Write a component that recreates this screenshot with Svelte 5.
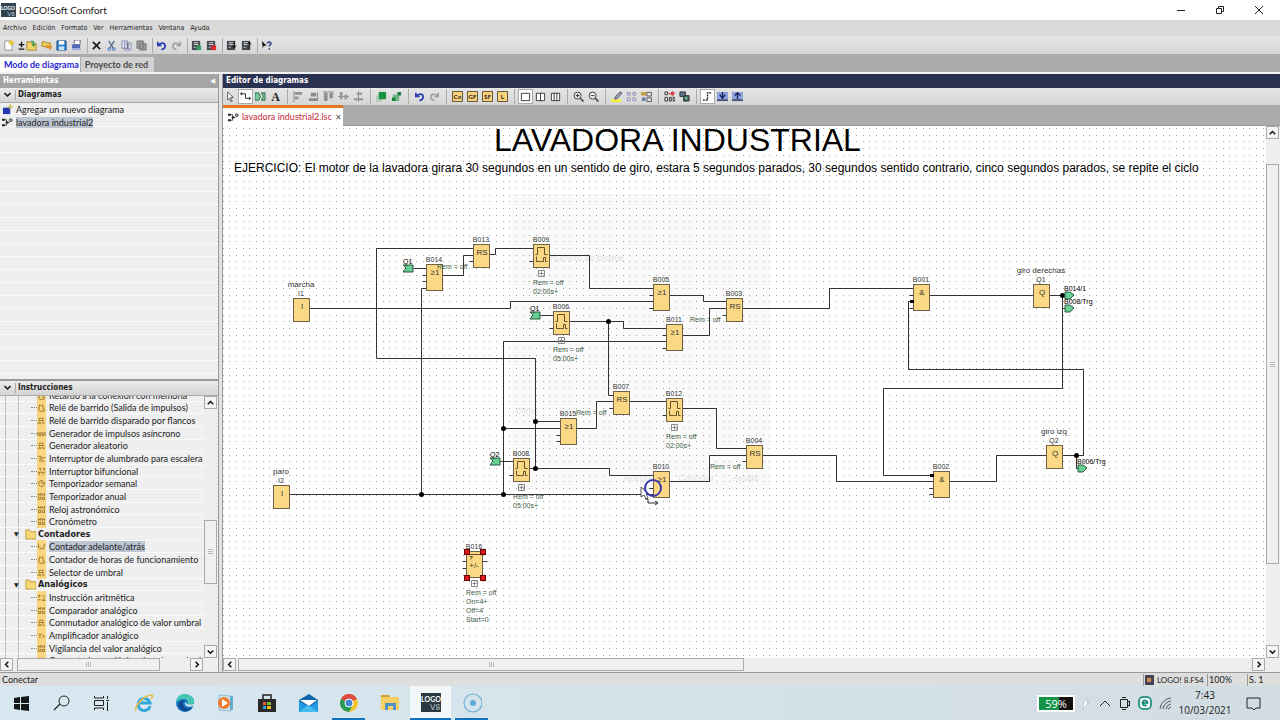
<script>
	const menus = ['Archivo', 'Edición', 'Formato', 'Ver', 'Herramientas', 'Ventana', 'Ayuda'];

	const undo = '<path d="M2 2v4h4M2.5 6C5 2 10 3 10 6.500 10 9 8 10 6 10.500" fill="none" stroke="#2938b5" stroke-width="1.8"/>';
	const redo = '<path d="M10 2v4H6M9.500 6C7 2 2 3 2 6.500 2 9 4 10 6 10.500" fill="none" stroke="#9b9b9b" stroke-width="1.6"/>';
	const page = '<path d="M2 1h6l2 2v8H2z" fill="#fff" stroke="#8a9099"/>';
	const chip = '<path d="M1 1h9v10H1z" fill="#45494e"/><path d="M3 3h5M3 5h5M3 8h2" stroke="#dfe3e6"/>';
	const diagram = '<path d="M2 3h3v6H2M5 6h3" fill="none" stroke="#444"/><path d="M0 2h3v2H0zM0 8h3v2H0zM4 5h3v2H4z" fill="#222"/><circle cx="9.500" cy="3.500" r="1.500" fill="#9c9" stroke="#333"/>';
	const letterBox = (t) =>
		`<path d="M.5.5h11v11H.5z" fill="#fbd27a" stroke="#574a2c"/><text x="6" y="8.500" font-size="7" font-weight="bold" text-anchor="middle" fill="#222">${t}</text>`;

	const icons = {
		newFile: page + '<path d="M9 0v6M6 3h6" stroke="#e5c72b" stroke-width="2"/>',
		plusMinus: '<path d="M6 2v6M3 5h6M3 10h6" stroke="#111" stroke-width="1.500"/>',
		open: '<path d="M1 2h4l1 2h5v7H1z" fill="#f4d56a" stroke="#a98523"/><path d="M5 1c3-1 5 1 4 4l2-1-3 4-2-4 2 1c0-2-1-3-3-3z" fill="#2d9c49"/>',
		load: '<path d="M1 2h4l1 1h4v4H1z" fill="#f0cd63" stroke="#a98523"/><path d="M5 6h5V3l2 5-3 4V9H5z" fill="#d99325"/>',
		save: '<path d="M1 1h10v10H1z" fill="#2a7fc9" stroke="#1b4f86"/><path d="M3 1h6v4H3z" fill="#fff"/><path d="M3 7h6v4H3z" fill="#c9e4f7"/>',
		print: '<path d="M4 0h6v5H3z" fill="#fff" stroke="#667"/><path d="M1 5h9v4H1z" fill="#5368bb"/><path d="M1 9h10v2H1z" fill="#9eabe0"/>',
		remove: '<path d="M2 2l8 8M10 2l-8 8" stroke="#15171c" stroke-width="1.700"/>',
		cut: '<path d="M3 1l5 8M9 1L4 9" stroke="#4c6484" stroke-width="1.300"/><circle cx="3.500" cy="10" r="1.500" fill="none" stroke="#2f76bd"/><circle cx="8.500" cy="10" r="1.500" fill="none" stroke="#2f76bd"/>',
		copy: '<path d="M1 1h6v8H1zM4 3h7v8H4z" fill="#dfe3f2" stroke="#848cac"/><path d="M6 5h3M7.500 5v4M6 9h3" stroke="#556"/>',
		paste: '<path d="M1 1h7v8H1zM4 4h7v7H4z" fill="#9b9b9b" stroke="#777"/>',
		undo,
		redo,
		run: chip + '<path d="M6 6h5v5H6z" fill="#31a265"/>',
		stop: chip + '<path d="M6 6h5v5H6z" fill="#e12a2d"/>',
		toPlc: chip + '<path d="M9 1v7M7 6l2 3 2-3" fill="none" stroke="#111"/>',
		fromPlc: chip + '<path d="M9 10V3M7 5l2-3 2 3" fill="none" stroke="#111"/>',
		help: '<path d="M1 1l5 5-3 .5L2 9z" fill="#111"/><path d="M7 4c0-3 4-2 4 0 0 1-2 1-2 3M9 9v1.500" fill="none" stroke="#26357d" stroke-width="1.500"/>',
		pointer: '<path d="M3 1l6 6H6l2 4-1.500.5L5 8 3 10z" fill="#fff" stroke="#333" stroke-width=".8"/>',
		wire: '<path d="M1 3h5v5h5" fill="none" stroke="#222"/><path d="M0 3l2-2v4zM12 8l-2-2v4z" fill="#222"/>',
		connector: '<path d="M0 2h4l2 4-2 4H0zM11 2H7l2 4-2 4h4z" fill="#7ac795" stroke="#276b44"/>',
		text: '<text x="6" y="11" font-size="13" font-family="Liberation Serif, serif" font-weight="bold" text-anchor="middle" fill="#222">A</text>',
		alignLeft: '<path d="M1 0v12" stroke="#888"/><path d="M2 1h8v3H2zM2 6h4v3H2z" fill="#929292"/>',
		alignRight: '<path d="M10 1h1v10H1V8h9zM3 2h6v4H3z" fill="#8b8b8b"/>',
		alignTop: '<path d="M0 1h12" stroke="#888"/><path d="M1 2h4v9H1zM7 2h4v6H7z" fill="#8f8f8f"/>',
		centerV: '<path d="M0 6h12" stroke="#888"/><path d="M2 1h3v8H2zM7 4h3v5H7z" fill="#979797"/>',
		centerH: '<path d="M6 0v12" stroke="#888"/><path d="M4 2h6v2H4zM1 8h10v2H1z" fill="#929292"/>',
		front: '<path d="M0 5h7v7H0z" fill="#b5cbbb"/><path d="M3 1h8v8H3z" fill="#189443"/>',
		back: '<path d="M2 4h7v7H2z" fill="#6fb585"/><path d="M1 7h4v4H1zM7 1h4v4H7z" fill="#187f3b"/>',
		co: letterBox('Co'),
		gf: letterBox('GF'),
		sf: letterBox('SF'),
		l: letterBox('L'),
		one: '<path d="M1.500 2.500h9v8h-9z" fill="#fff" stroke="#333"/>',
		two: '<path d="M1.500 2.500h9v8h-9zM6 2v9" fill="#fff" stroke="#333"/>',
		three: '<path d="M1.500 2.500h9v8h-9zM4.500 2v9M7.500 2v9" fill="#fff" stroke="#333"/>',
		zoomIn: '<circle cx="5" cy="5" r="3.800" fill="#eef4f7" stroke="#333"/><path d="M3 5h4M5 3v4" stroke="#222"/><path d="M8 8l3.500 3.500" stroke="#555" stroke-width="2"/>',
		zoomOut: '<circle cx="5" cy="5" r="3.800" fill="#eef4f7" stroke="#333"/><path d="M3 5h4" stroke="#222"/><path d="M8 8l3.500 3.500" stroke="#555" stroke-width="2"/>',
		marker: '<path d="M0 9h11v3H0z" fill="#f5ed35"/><path d="M4 9l1-3 5-5 2 1-5 6z" fill="#98a1aa" stroke="#556"/>',
		grid: '<path d="M1.500 1.500h3v3h-3zM7.500 1.500h3v3h-3zM1.500 7.500h3v3h-3zM7.500 7.500h3v3h-3z" fill="#edf0ff" stroke="#5b6795" stroke-dasharray="2 1"/>',
		params: '<path d="M0 1h6v4H0z" fill="#c0a347"/><path d="M6.500 1.500h5v4h-5zM6.500 7.500h5v4h-5z" fill="#e4e4e4" stroke="#555"/><path d="M1 7h4v4H1z" fill="#6780a8"/>',
		simulate: '<path d="M1 1h3v3H1zM1 7h3v4H1zM6 7h2v4H6zM10 7h2v4h-2z" fill="none" stroke="#333"/><path d="M5 3h4v3" fill="none" stroke="#d22"/><circle cx="9.500" cy="2.500" r="1.500" fill="#e66" stroke="#b11"/>',
		online: '<path d="M1 1h6v5H1z" fill="#5c708b" stroke="#333"/><path d="M5 5h6v6H5z" fill="#3f6b5c" stroke="#333"/><path d="M7 7h2v2H7z" fill="#8fe0a8"/>',
		lines: '<path d="M1 10h5V2h5" fill="none" stroke="#111" stroke-width="1.500" stroke-dasharray="2 1"/>',
		expand: '<path d="M0 1h12v10H0z" fill="#8ea3dd"/><path d="M0 9h12v2H0z" fill="#4d5677"/><path d="M6 1v6M3 4l3 4 3-4" fill="none" stroke="#17245e" stroke-width="1.500"/>',
		collapse: '<path d="M0 1h12v10H0z" fill="#8ea3dd"/><path d="M0 9h12v2H0z" fill="#4d5677"/><path d="M6 9V3M3 5l3-3 3 3" fill="none" stroke="#17245e" stroke-width="1.500"/>',
		addDiagram: '<path d="M1 4h8v7H1z" fill="#2539b4"/><path d="M9 0v6M6 3h6" stroke="#cbbd62" stroke-width="1.500"/>',
		diagram,
		folder: '<path d="M1 3V1h4l1 2h6v8H1z" fill="#f7d978" stroke="#bf9a3f"/>'
	};

	const mainTools = [
		['newFile', 'plusMinus', 'open', 'load', 'save', 'print'],
		['remove', 'cut', 'copy', 'paste'],
		['undo', 'redo'],
		['run', 'stop'],
		['toPlc', 'fromPlc'],
		['help']
	];
	const editorTools = [
		['pointer', 'wire', 'connector', 'text'],
		['alignLeft', 'alignRight', 'alignTop', 'centerV', 'centerH'],
		['front', 'back'],
		['undo', 'redo'],
		['co', 'gf', 'sf', 'l'],
		['one', 'two', 'three'],
		['zoomIn', 'zoomOut'],
		['marker', 'grid', 'params'],
		['simulate', 'online'],
		['lines', 'expand', 'collapse']
	];
	const pressed = ['wire', 'one', 'lines'];

	// small glyphs on the yellow strip of the instruction tree
	const glyphs = {
		relay: 'M1 9h2V3h5v6h3M3 11h7',
		edge: 'M1 10h2V3h5v7h2M4 6h4M5 8v3',
		comb: 'M1 9V5h2v4h2V5h2v4h2V5h2v4',
		stair: 'M1 3h4l2 7h3M4 5v6M6 5h5',
		dual: 'M2 2h3v3M7 2h3v3M1 7h10M3 7v4M8 7v4',
		clock: 'M6 2a4 4 0 1 0 .1 0M6 3v3h3',
		date: 'M2 5V2l2 2 1-2v3M7 5V2l2 2 1-2v3M2 7h3v3H2zM7 7h3v3H7z',
		math: 'M1 4h4M3 2v4M7 4h4M1 9h4M7 8h4M7 10h4',
		count: 'M2 2v5h3M4 9h5V4h2M2 10h1',
		amp: 'M2 3l2 3 2-3M4 6v4M7 5l3 2-3 2'
	};
	const tree = [
		{ t: 'Retardo a la conexión con memoria', g: 'relay' },
		{ t: 'Relé de barrido (Salida de impulsos)', g: 'relay' },
		{ t: 'Relé de barrido disparado por flancos', g: 'edge' },
		{ t: 'Generador de impulsos asíncrono', g: 'comb' },
		{ t: 'Generador aleatorio', g: 'edge' },
		{ t: 'Interruptor de alumbrado para escalera', g: 'stair' },
		{ t: 'Interruptor bifuncional', g: 'dual' },
		{ t: 'Temporizador semanal', g: 'clock' },
		{ t: 'Temporizador anual', g: 'date' },
		{ t: 'Reloj astronómico', g: 'date' },
		{ t: 'Cronómetro', g: 'date' },
		{ t: 'Contadores', folder: true },
		{ t: 'Contador adelante/atrás', g: 'count', sel: true },
		{ t: 'Contador de horas de funcionamiento', g: 'relay' },
		{ t: 'Selector de umbral', g: 'edge' },
		{ t: 'Analógicos', folder: true },
		{ t: 'Instrucción aritmética', g: 'math' },
		{ t: 'Comparador analógico', g: 'date' },
		{ t: 'Conmutador analógico de valor umbral', g: 'edge' },
		{ t: 'Amplificador analógico', g: 'amp' },
		{ t: 'Vigilancia del valor analógico', g: 'date' },
		{ t: 'Conmutador analógico de valor umbral dif', g: 'relay' }
	];

	// scroll position of the sheet inside the canvas
	const scroll = { x: 223, y: 126 };

	const blocks = [
		{ id: 'I1', x: 293, y: 298, k: 'I', title: 'marcha' },
		{ id: 'I2', x: 273, y: 485, k: 'I', title: 'paro' },
		{ id: 'B013', x: 473, y: 244, k: 'RS' },
		{ id: 'B009', x: 533, y: 244, k: 'pulse', par: ['Rem = off', '02:00s+'] },
		{ id: 'B014', x: 426, y: 264, k: '≥1' },
		{ id: 'B006', x: 553, y: 311, k: 'pulse', par: ['Rem = off', '05:00s+'] },
		{ id: 'B005', x: 653, y: 284, k: '≥1' },
		{ id: 'B003', x: 726, y: 298, k: 'RS' },
		{ id: 'B011', x: 666, y: 324, k: '≥1' },
		{ id: 'B007', x: 613, y: 391, k: 'RS' },
		{ id: 'B012', x: 666, y: 398, k: 'pulse', par: ['Rem = off', '02:00s+'] },
		{ id: 'B015', x: 560, y: 418, k: '≥1' },
		{ id: 'B008', x: 513, y: 458, k: 'pulse', par: ['Rem = off', '05:00s+'] },
		{ id: 'B010', x: 653, y: 471, k: '≥1' },
		{ id: 'B004', x: 746, y: 445, k: 'RS' },
		{ id: 'B001', x: 913, y: 284, k: '&' },
		{ id: 'B002', x: 933, y: 471, k: '&' },
		{ id: 'Q1', x: 1033, y: 284, k: 'Q', title: 'giro derechas' },
		{ id: 'Q2', x: 1046, y: 445, k: 'Q', title: 'giro izq' },
		{ id: 'B016', x: 466, y: 551, k: '+/-', sel: true, par: ['Rem = off', 'On=4+', 'Off=4', 'Start=0'] }
	];
	const isTall = (b) => ['≥1', '&', '+/-'].includes(b.k);
	const heightOf = (b) => (isTall(b) ? 26 : 23);

	const wires = [
		'M309 308H510V301H653',
		'M473 248H376V358H535V468',
		'M413 268H426',
		'M442 275H463V255H473',
		'M426 288H421V494',
		'M489 254H495V248H533',
		'M549 255H589V288H653',
		'M540 315H553',
		'M569 321H623V328H666',
		'M608 321V395H613',
		'M669 295H703V301H726',
		'M682 335H709V308H726',
		'M666 341H503V494',
		'M742 308H829V288H913',
		'M929 295H1033',
		'M1049 295H1062V388H883V475H933',
		'M1062 295V308H1066',
		'M913 301H908V369H1083V455H1062',
		'M1076 455V468H1080',
		'M762 455H836V481H933',
		'M949 481H996V455H1046',
		'M503 428H560',
		'M535 421H560',
		'M576 428H596V401H613',
		'M629 401H666',
		'M682 408H716V448H746',
		'M669 481H709V455H746',
		'M500 461H513',
		'M529 468H609V475H653',
		'M289 494H653',
		// open pins
		'M469 261H473M529 261H533M422 275H426M422 281H426M549 328H553M649 295H653M649 308H653',
		'M722 315H726M662 335H666M662 348H666M609 408H613M662 415H666M556 435H560M556 441H560',
		'M509 475H513M649 488H653M742 461H746M909 295H913M909 308H913M929 488H933M929 494H933',
		'M462 561H466M462 568H466M482 561H487'
	];
	const nodes = [[608, 321], [503, 428], [535, 421], [535, 468], [421, 494], [503, 494], [1062, 295], [1076, 455]];
	const remNotes = [[437, 269], [690, 322], [576, 415], [710, 469]];
	const sources = [['Q1', 403, 268], ['Q1', 530, 315], ['Q2', 490, 461]];
	const targets = [['B014/1', 1064, 295], ['B008/Trg', 1064, 308], ['B006/Trg', 1077, 468]];

	const tasks = [
		{ n: 'Inicio', d: '<path d="M3 5l6-1v6H3zM10 4l8-1v7h-8zM3 11h6v6l-6-1zM10 11h8v7l-8-1z" fill="#14181b"/>' },
		{ n: 'Buscar', d: '<circle cx="12" cy="8" r="5" fill="none" stroke="#222"/><path d="M8 11l-6 6" stroke="#222" stroke-width="1.300"/>' },
		{ n: 'Vista de tareas', d: '<path d="M1.500 3v2h9V3M1.500 17v-2h9v2M1.500 7.500h9v5h-9zM14.500 3v3M14.500 9v9M13 7.500h3" fill="none" stroke="#222"/>' },
		{ n: 'Internet Explorer', d: '<path d="M16 13a6 6 0 1 1 0-3H6" fill="none" stroke="#35a9de" stroke-width="3"/><path d="M2 18C0 13 10 2 18 2c1 1 0 3-1 4" fill="none" stroke="#e9c04a" stroke-width="1.600"/>' },
		{ n: 'Edge', d: '<circle cx="10" cy="10" r="9" fill="#1977c5"/><path d="M1 10C1 4 5 1 10 1s10 4 9 8c-1 4-6 3-7 2 2-2 0-5-3-5-4 0-7 2-8 4z" fill="#45c7b4"/><path d="M8 10c0 5 5 7 9 4-2 4-6 5-9 4-5-2-6-7-3-10 1-1 4-1 5 0-1 0-2 1-2 2z" fill="#124b91"/><path d="M10 9c-1 4 4 6 8 4l2-2v-1c-2 2-6 2-8 1z" fill="#d5e5ec"/>' },
		{ n: 'Reproductor', d: '<path d="M3 2l12 1v15l-12-1z" fill="#cfe3ef" stroke="#8fbcd6"/><path d="M14 3h3v14h-3z" fill="#67abcf"/><circle cx="8" cy="10" r="6" fill="#ee7a2c"/><path d="M6 6l6 4-6 4z" fill="#fff"/>' },
		{ n: 'Store', d: '<path d="M6 6V2h8v4" fill="none" stroke="#222" stroke-width="1.500"/><path d="M1 6h18v13H1z" fill="#2a2a2b"/><path d="M6 9h3v3H6z" fill="#ed5632"/><path d="M10 9h4v3h-4z" fill="#80ba2e"/><path d="M6 13h3v3H6z" fill="#2ba3e0"/><path d="M10 13h4v3h-4z" fill="#f9bd19"/>' },
		{ n: 'Correo', d: '<path d="M1 7l10-6 9 6v12H1z" fill="#1166af"/><path d="M2 7h17l-8 6z" fill="#fff"/><path d="M1 8l10 6 9-6v11H1z" fill="#239be0"/><path d="M1 19l9-7 10 7z" fill="#48bdf0"/>' },
		{ n: 'Chrome', run: true, d: '<circle cx="10" cy="10" r="9" fill="#f3c631"/><path d="M10 10L2 6a9 9 0 0 1 16 0z" fill="#db4b3f"/><path d="M2 6a9 9 0 0 0 8 13l4-7-4-2z" fill="#289b59"/><circle cx="10" cy="10" r="4" fill="#4285d8" stroke="#fff"/>' },
		{ n: 'Explorador', d: '<path d="M1 2h8l1 2h9v13H1z" fill="#f6d062"/><path d="M1 2h8l1 2H1z" fill="#d5a02c"/><path d="M5 17v-7h11v7h-3v-4H8v4z" fill="#4a93c8"/>' },
		{ n: 'LOGO!Soft Comfort', run: true, active: true, d: '<path d="M0 0h20v19H0z" fill="#2b3942"/><text x="10" y="9" font-size="7" font-weight="bold" text-anchor="middle" fill="#fff">LOGO</text><text x="14" y="17" font-size="8" text-anchor="middle" fill="#bbc7cd">V8</text>' },
		{ n: 'Grabador', run: true, d: '<circle cx="11" cy="10" r="9" fill="none" stroke="#68b1d8" stroke-width="1.200"/><circle cx="11" cy="10" r="3" fill="#5eacd7"/>' }
	];
</script>

{#snippet icon(name)}
	<svg class="icon" viewBox="0 0 12 12" aria-hidden="true">{@html icons[name]}</svg>
{/snippet}

{#snippet toolbar(groups)}
	{#each groups as group}
		<div class="group">
			{#each group as name}
				<button class="tool" class:pressed={pressed.includes(name)} class:narrow={name === 'plusMinus'} aria-label={name}>
					{@render icon(name)}
				</button>
			{/each}
		</div>
	{/each}
{/snippet}

{#snippet arrow(label, d)}
	<button class="arrow" aria-label={label}>
		<svg viewBox="0 0 12 12" aria-hidden="true"><path {d} fill="none" stroke="#111" stroke-width="1.6" /></svg>
	</button>
{/snippet}

<div class="app">
	<header class="titlebar">
		<svg class="logo" viewBox="0 0 15 14" aria-hidden="true">
			<path d="M0 0h15v14H0z" fill="#2f4450" />
			<text x="7" y="7" font-size="5" font-weight="bold" text-anchor="middle" fill="#fff">LOGO</text>
			<text x="10" y="13" font-size="6" text-anchor="middle" fill="#b8c8d0">V8</text>
		</svg>
		<h1>LOGO!Soft Comfort</h1>
		<div class="window-buttons">
			<button aria-label="Minimizar"><svg viewBox="0 0 10 10"><path d="M1 5.500h8" /></svg></button>
			<button aria-label="Restaurar"><svg viewBox="0 0 10 10"><path d="M1.500 3.500h5v5h-5zM3.500 3V1.500h5v5H7" /></svg></button>
			<button aria-label="Cerrar"><svg viewBox="0 0 10 10"><path d="M1 1l8 8M9 1L1 9" /></svg></button>
		</div>
	</header>

	<nav class="menubar">
		{#each menus as menu}
			<button>{menu}</button>
		{/each}
	</nav>

	<div class="toolbar main-tools">{@render toolbar(mainTools)}</div>

	<div class="modes">
		<button class="current">Modo de diagrama</button>
		<button>Proyecto de red</button>
	</div>

	<main>
		<aside>
			<div class="panel-title">
				<span>Herramientas</span>
				<button class="fold" aria-label="Ocultar">◀</button>
			</div>
			<section class="diagrams">
				<h2>
					<svg viewBox="0 0 10 10" aria-hidden="true"><path d="M2 3l3 3 3-3" /></svg>
					<span>Diagramas</span>
				</h2>
				<ul>
					<li>{@render icon('addDiagram')}<span>Agregar un nuevo diagrama</span></li>
					<li>{@render icon('diagram')}<span class="selected">lavadora industrial2</span></li>
				</ul>
			</section>
			<section class="instructions">
				<h2>
					<svg viewBox="0 0 10 10" aria-hidden="true"><path d="M2 3l3 3 3-3" /></svg>
					<span>Instrucciones</span>
				</h2>
				<div class="tree-area">
					<div class="tree-view">
						<ul class="tree">
							{#each tree as node}
								{#if node.folder}
									<li class="folder"><i>▼</i>{@render icon('folder')}<span>{node.t}</span></li>
								{:else}
									<li>
										<b></b>
										<svg class="glyph" viewBox="0 0 12 12" aria-hidden="true"><path d={glyphs[node.g]} /></svg>
										<span class:selected={node.sel}>{node.t}</span>
									</li>
								{/if}
							{/each}
						</ul>
					</div>
					<div class="vscroll">
						{@render arrow('Subir', 'M3 8l3-3 3 3')}
						<div class="track"><div class="thumb" style="top: 47%; height: 27%"></div></div>
						{@render arrow('Bajar', 'M3 5l3 3 3-3')}
					</div>
				</div>
				<div class="hscroll">
					{@render arrow('Izquierda', 'M8 3L5 6l3 3')}
					<div class="track"><div class="thumb" style="left: 1%; width: 83%"></div></div>
					{@render arrow('Derecha', 'M5 3l3 3-3 3')}
				</div>
			</section>
		</aside>

		<section class="editor">
			<div class="panel-title dark">Editor de diagramas</div>
			<div class="toolbar editor-tools">{@render toolbar(editorTools)}</div>
			<div class="file-tabs">
				<div class="file-tab">
					{@render icon('diagram')}
					<span>lavadora industrial2.lsc</span>
					<button aria-label="Cerrar pestaña">✕</button>
				</div>
			</div>
			<div class="sheet">
				<svg class="canvas" role="img" aria-label="Diagrama de funciones">
					<defs>
						<pattern id="dots" width="20" height="20" patternUnits="userSpaceOnUse">
							{#each [2, 9, 15] as y}
								{#each [0, 6, 13] as x}
									<rect {x} {y} width="1" height="1" fill="#a4a4a4" />
								{/each}
							{/each}
						</pattern>
					</defs>
					<rect width="100%" height="100%" fill="url(#dots)" />
					<g transform="translate({-scroll.x} {-scroll.y})">
						<text class="heading" x="494" y="151">LAVADORA INDUSTRIAL</text>
						<text class="exercise" x="234" y="172">
							EJERCICIO: El motor de la lavadora girara 30 segundos en un sentido de giro, estara 5 segundos parados, 30 segundos sentido contrario, cinco segundos parados, se repite el ciclo
						</text>

						<!-- parameter dialog fading out -->
						<g class="fading">
							<rect x="512" y="194" width="258" height="296" />
							<text x="550" y="261">Número de bloque</text>
							<text x="516" y="414">Otros</text>
							<text x="624" y="481">Aceptar</text>
							<text x="678" y="481">Cancelar</text>
							<text x="733" y="481">Ayuda</text>
						</g>

						{#each wires as d}
							<path class="wire" {d} />
						{/each}

						{#each blocks as b}
							<g class="block" transform="translate({b.x} {b.y})">
								<rect width="16" height={heightOf(b)} />
								<text class="id" x="8" y="-2">{b.id}</text>
								{#if b.title}
									<text class="title" x="8" y="-11">{b.title}</text>
								{/if}
								{#if b.k === 'pulse'}
									<path d="M2 10h2V3h7v7h3M3 12v5h4M7 17h3v-4h2v4h2" />
								{:else if b.k === '+/-'}
									<text class="kind" x="8" y="17">+/-</text>
									<path d="M0 3h16M3 5h3l-2 3" />
								{:else}
									<text class="kind" x="9" y="11">{b.k}</text>
								{/if}
								{#if b.par}
									<g class="params" transform="translate(0 {heightOf(b)})">
										<path d="M5 3h6v6H5zM6 6h4M8 4v4" />
										{#each b.par as line, i}
											<text x="0" y={18 + i * 9}>{line}</text>
										{/each}
									</g>
								{/if}
								{#if b.sel}
									{#each [0, 16] as x}
										{#each [0, 26] as y}
											<rect class="handle" x={x - 2} y={y - 2} width="5" height="5" />
										{/each}
									{/each}
								{/if}
							</g>
						{/each}

						{#each remNotes as [x, y]}
							<text class="note" {x} {y}>Rem = off</text>
						{/each}
						{#each nodes as [x, y]}
							<circle cx={x + 0.5} cy={y + 0.5} r="2.5" />
						{/each}
						<rect x="910" y="300" width="4" height="3" />
						<rect x="930" y="474" width="4" height="3" />

						{#each sources as [name, x, y]}
							<path class="tag" d="M{x} {y - 3}h10v7h-10l3-4z" />
							<text class="small" {x} y={y - 4}>{name}</text>
						{/each}
						{#each targets as [name, x, y]}
							<path class="tag" d="M{x + 1} {y - 3}h5l4 3-4 4h-5z" />
							<text class="small" {x} y={y - 4}>{name}</text>
						{/each}

						<!-- cursor -->
						<path d="M641 487v10l3-2 2 4 2-1-2-4h3z" fill="#fff" stroke="#555" />
						<path d="M645 499h3v4h9M655 501l3 2-3 2" fill="none" stroke="#333" />
						<circle class="click" cx="653" cy="488" r="8" />
					</g>
				</svg>
				<div class="vscroll">
					{@render arrow('Subir', 'M3 8l3-3 3 3')}
					<div class="track"><div class="thumb" style="top: 5%; height: 79%"></div></div>
					{@render arrow('Bajar', 'M3 5l3 3 3-3')}
				</div>
			</div>
			<div class="hscroll">
				{@render arrow('Izquierda', 'M8 3L5 6l3 3')}
				<div class="track"><div class="thumb" style="left: 0; width: 50%"></div></div>
				{@render arrow('Derecha', 'M5 3l3 3-3 3')}
			</div>
		</section>
	</main>

	<footer class="status">
		<span class="message">Conectar</span>
		<span class="device">
			<svg viewBox="0 0 9 10" aria-hidden="true"><path d="M0 0h9v10H0z" fill="#445" /><path d="M2 3h4v4H2z" fill="#d68a4e" /></svg>
			LOGO! 8.FS4
		</span>
		<span class="zoom">100%</span>
		<span class="page">S. 1</span>
	</footer>

	<div class="taskbar">
		{#each tasks as task}
			<button class="task" class:run={task.run} class:active={task.active} aria-label={task.n}>
				<svg viewBox="0 0 20 20" aria-hidden="true">{@html task.d}</svg>
			</button>
		{/each}
		<div class="tray">
			<span class="battery">59%</span>
			<svg viewBox="0 0 20 20" aria-hidden="true"><path d="M8 17l1-8 3-4v5l2-1-4 5z" fill="#fff" stroke="#9aa8af" stroke-width=".5" /></svg>
			<svg viewBox="0 0 20 20" aria-hidden="true"><path d="M5 13l5-5 5 5" /></svg>
			<svg viewBox="0 0 20 20" aria-hidden="true"><path d="M5.500 6.500h7v8h-7zM12.500 9l2-1v5l-2-1M7 4.500h4M7 16.500h4" /></svg>
			<svg viewBox="0 0 20 20" aria-hidden="true">
				<rect x="4" y="4" width="12" height="12" rx="4" fill="#e9f6f3" stroke="#087f6f" stroke-width="1.5" />
				<path d="M7.500 10h5a2.500 2.500 0 1 0-1 2" stroke="#087f6f" stroke-width="1.6" />
			</svg>
			<svg viewBox="0 0 20 20" aria-hidden="true"><path d="M5 16A12 12 0 0 1 16 5M8 16a9 9 0 0 1 8-8M11 16a6 6 0 0 1 5-5M13 16l3-2" stroke="#555" /></svg>
			<time><span>7:43</span><span>10/03/2021</span></time>
			<button aria-label="Notificaciones">
				<svg viewBox="0 0 20 20" aria-hidden="true"><path d="M4 5h13v10h-4l-2 2-2-2H4z" /></svg>
			</button>
		</div>
	</div>
</div>

<style>
	:global(body) {
		margin: 0;
		overflow: hidden;
	}
	.app {
		display: flex;
		flex-direction: column;
		height: 100vh;
		background: #e2e2e2;
		color: #222;
		font: 9px/12px Lato, 'Noto Sans', sans-serif;
	}
	button {
		padding: 0;
		border: 0;
		background: none;
		color: inherit;
		font: inherit;
	}
	h1,
	h2,
	ul {
		margin: 0;
		padding: 0;
		font: inherit;
		list-style: none;
	}
	svg {
		display: block;
		flex: none;
	}
	.titlebar {
		display: flex;
		align-items: center;
		height: 20px;
		background: #fff;
	}
	.logo {
		width: 15px;
		height: 14px;
		margin: 0 3px 0 1px;
	}
	.titlebar h1 {
		flex: 1;
		font-size: 10px;
		line-height: 16px;
	}
	.window-buttons {
		display: flex;
		margin-right: 2px;
	}
	.window-buttons button {
		width: 39px;
		height: 20px;
	}
	.window-buttons svg {
		width: 10px;
		height: 10px;
		margin: auto;
		fill: none;
		stroke: #222;
	}
	.menubar {
		display: flex;
		gap: 6px;
		height: 16px;
		padding: 0 3px;
		background: #dadada;
		font-family: 'DejaVu Sans Condensed', 'Noto Sans', sans-serif;
		font-size: 7px;
	}
	.toolbar {
		display: flex;
		align-items: center;
		background: linear-gradient(#e5e5e5, #d6d6d6);
	}
	.main-tools {
		height: 18px;
		padding-left: 1px;
	}
	.editor-tools {
		height: 17px;
	}
	.group {
		display: flex;
	}
	.group + .group {
		margin-left: 4px;
		padding-left: 3px;
		border-left: 1px solid #aaa;
	}
	.main-tools .group + .group {
		margin-left: 3px;
		padding-left: 1px;
	}
	.tool {
		display: grid;
		place-items: center;
		width: 15px;
		height: 15px;
		box-sizing: border-box;
	}
	.narrow {
		width: 8px;
	}
	.pressed {
		border: 1px solid #aaa;
		background: #fff;
	}
	.icon {
		width: 11px;
		height: 11px;
	}
	.modes {
		display: flex;
		align-items: flex-end;
		gap: 1px;
		height: 18px;
		border-bottom: 2px solid #f2f2f2;
		background: #ababab;
		font-weight: bold;
	}
	.modes button {
		height: 15px;
		padding: 0 6px 0 4px;
		background: #d2d2d2;
		color: #4a4a4a;
	}
	.modes .current {
		padding: 0 1px 0 4px;
		background: #fff;
		color: #1f1fd0;
	}
	main {
		display: flex;
		flex: 1;
		min-height: 0;
	}
	aside {
		display: flex;
		flex-direction: column;
		width: 219px;
		margin-right: 3px;
		border-right: 1px solid #999;
		box-sizing: border-box;
		background: #efefef;
	}
	.panel-title,
	h2,
	.tree .folder {
		font-family: 'DejaVu Sans Condensed', 'Noto Sans', sans-serif;
		font-weight: bold;
		font-size: 8px;
	}
	.panel-title {
		display: flex;
		justify-content: space-between;
		height: 14px;
		padding: 0 3px;
		background: #a5a5a5;
		color: #fff;
		line-height: 14px;
	}
	.fold {
		font-size: 7px;
	}
	.dark {
		background: #2b3150;
	}
	h2 {
		display: flex;
		align-items: center;
		height: 15px;
		border-bottom: 1px solid #aaa;
		box-sizing: border-box;
		background: linear-gradient(#ececec, #d4d4d4);
	}
	h2 svg {
		width: 15px;
		height: 10px;
		border-right: 1px solid #aaa;
		fill: none;
		stroke: #111;
		stroke-width: 1.5px;
	}
	h2 span {
		margin-left: 2px;
	}
	.diagrams {
		flex: 1;
		background: repeating-linear-gradient(#efefef 0 12px, #fafafa 12px 13px);
	}
	.diagrams li {
		display: flex;
		align-items: center;
		gap: 3px;
		height: 13px;
		padding-left: 2px;
		line-height: 11px;
	}
	.selected {
		background: #bdc5d3;
	}
	.instructions {
		display: flex;
		flex: none;
		flex-direction: column;
		height: 43%;
		min-height: 293px;
		box-sizing: border-box;
		border-top: 2px solid #999;
	}
	.tree-area {
		display: flex;
		flex: 1;
		min-height: 0;
	}
	.tree-view {
		display: flex;
		flex: 1;
		min-width: 0;
		overflow: hidden;
	}
	.tree {
		display: grid;
		grid-auto-rows: 1fr;
		flex: 1;
		min-width: 0;
		margin: -7px 0 -9px;
		background: linear-gradient(90deg, transparent 5px, #bbb 5px 6px, transparent 6px 18px, #bbb 18px 19px, transparent 19px);
	}
	.tree li {
		display: flex;
		align-items: center;
		min-height: 0;
		padding-left: 31px;
		box-shadow: inset 0 -1px #fafafa;
		line-height: 11px;
		white-space: nowrap;
	}
	.tree b {
		width: 6px;
		border-top: 1px dotted #888;
	}
	.glyph {
		width: 9px;
		height: 13px;
		margin-right: 3px;
		background: #fbd681;
		fill: none;
		stroke: #806326;
	}
	.tree .folder {
		padding-left: 14px;
		font-size: 9px;
	}
	.folder i {
		width: 11px;
		font: 6px/8px 'DejaVu Sans', sans-serif;
	}
	.folder span {
		margin-left: 2px;
	}
	.arrow {
		flex: none;
		width: 13px;
		height: 13px;
		border: 1px solid #aaa;
		box-sizing: border-box;
		background: #f4f4f4;
	}
	.vscroll {
		display: flex;
		flex-direction: column;
		width: 14px;
		background: #eee;
	}
	.hscroll {
		display: flex;
		gap: 2px;
		height: 14px;
		padding-right: 15px;
		background: #eee;
	}
	.track {
		position: relative;
		flex: 1;
	}
	.thumb {
		position: absolute;
		display: grid;
		place-items: center;
		box-sizing: border-box;
		border: 1px solid #aaa;
		background: #f0f0f0;
	}
	.thumb::after {
		width: 5px;
		height: 5px;
		background: repeating-linear-gradient(90deg, #bbb 0 1px, #f0f0f0 1px 2px);
		content: '';
	}
	.vscroll .thumb {
		width: 13px;
	}
	.vscroll .thumb::after {
		background: repeating-linear-gradient(#bbb 0 1px, #f0f0f0 1px 2px);
	}
	.hscroll .thumb {
		height: 13px;
	}
	.editor {
		display: flex;
		flex: 1;
		flex-direction: column;
		min-width: 0;
		border-left: 1px solid #999;
	}
	.file-tabs {
		display: flex;
		height: 20px;
		border-bottom: 1px solid #999;
		background: #ababab;
	}
	.file-tab {
		display: flex;
		align-items: center;
		gap: 3px;
		height: 18px;
		padding: 0 1px 0 5px;
		border-top: 3px solid #e67421;
		background: #fff;
		color: #c32a36;
	}
	.file-tab button {
		color: #555;
		font-size: 8px;
	}
	.sheet {
		display: flex;
		flex: 1;
		min-height: 0;
		background: #fff;
	}
	.canvas {
		flex: 1;
		min-width: 0;
		height: 100%;
		font-family: 'Liberation Sans', Arial, sans-serif;
	}
	.heading {
		font-size: 32px;
	}
	.exercise {
		font-size: 12px;
	}
	.fading {
		fill: #667;
		font-size: 9px;
		opacity: 0.2;
	}
	.fading rect {
		opacity: 0.15;
	}
	.wire {
		fill: none;
		stroke: #333;
		transform: translate(0.5px, 0.5px);
	}
	.block rect {
		fill: #fbd984;
		stroke: #6d6148;
		transform: translate(0.5px, 0.5px);
	}
	.block path {
		fill: none;
		stroke: #65522d;
		transform: translate(0.5px, 0.5px);
	}
	.block .params path {
		stroke: #888;
	}
	.block .handle {
		fill: #e01b1b;
		stroke: #600;
	}
	.id,
	.title,
	.kind {
		fill: #333;
		text-anchor: middle;
	}
	.id,
	.small,
	.note,
	.params {
		font-size: 7px;
	}
	.kind,
	.title {
		font-size: 8px;
	}
	.params,
	.note {
		fill: #3c5a45;
	}
	.tag {
		fill: #66cf91;
		stroke: #2b5940;
	}
	.click {
		fill: none;
		stroke: #3b3bb0;
		stroke-width: 2px;
	}
	.status {
		display: flex;
		align-items: center;
		height: 13px;
		border-top: 1px solid #999;
		background: #dedede;
	}
	.status span {
		border-left: 1px solid #999;
		padding-left: 1px;
		box-sizing: border-box;
	}
	.status .message {
		flex: 1;
		padding-left: 2px;
		border: 0;
	}
	.status .device {
		display: flex;
		gap: 3px;
		width: 64px;
		font-size: 8px;
		white-space: nowrap;
	}
	.device svg {
		width: 9px;
		height: 10px;
		margin-top: 1px;
	}
	.zoom {
		width: 40px;
	}
	.page {
		width: 33px;
	}
	.taskbar {
		display: flex;
		height: 34px;
		background: linear-gradient(90deg, #d8e8f1, #d2dce3);
	}
	.task {
		width: 41px;
	}
	.task svg {
		width: 20px;
		height: 20px;
		margin: auto;
	}
	.run {
		background: linear-gradient(#1273bd, #1273bd) center bottom / 33px 2px no-repeat;
	}
	.active {
		border-bottom: 2px solid #1273bd;
		padding-top: 2px;
		background: #f2f7fa;
	}
	.tray {
		display: flex;
		align-items: center;
		margin-left: auto;
	}
	.tray svg {
		width: 20px;
		height: 20px;
		fill: none;
		stroke: #222;
	}
	.battery {
		width: 38px;
		border: 2px solid #fff;
		box-sizing: border-box;
		background: linear-gradient(90deg, #159447 59%, #111 59%);
		color: #fff;
		font: 11px/13px 'Open Sans', sans-serif;
		text-align: center;
	}
	time {
		display: grid;
		width: 60px;
		font: 10px/15px 'Open Sans', sans-serif;
		text-align: center;
	}
	.tray button {
		padding: 0 17px 0 8px;
	}
</style>
